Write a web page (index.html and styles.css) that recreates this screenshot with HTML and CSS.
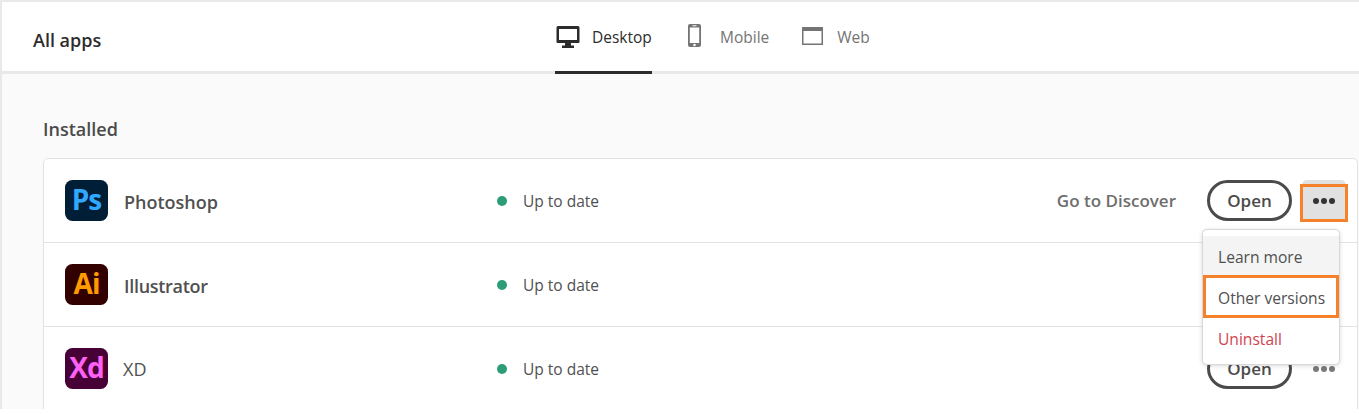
FILE: index.html
```html
<!DOCTYPE html>
<html lang="en">
<head>
<meta charset="utf-8">
<title>All apps</title>
<link rel="stylesheet" href="styles.css">
</head>
<body>
<div class="page">
  <header class="topbar">
    <h1 class="title">All apps</h1>
    <nav class="tabs">
      <a class="tab active">
        <svg class="ico" width="24" height="22" viewBox="0 0 24 22"><path fill="#2c2c2c" fill-rule="evenodd" d="M2 0h20a1.500 1.500 0 0 1 1.500 1.500V16a1 1 0 0 1-1 1H15v2.500h3V22H6v-2.500h3V17H1.500a1 1 0 0 1-1-1V1.500A1.500 1.500 0 0 1 2 0zm1 3V14h18V3z"/></svg>
        <span>Desktop</span>
      </a>
      <a class="tab mobile">
        <svg class="ico" width="13" height="23" viewBox="0 0 13 23"><path fill="#747474" fill-rule="evenodd" d="M2 0h9a2 2 0 0 1 2 2v19a2 2 0 0 1-2 2H2a2 2 0 0 1-2-2V2a2 2 0 0 1 2-2zM1.800 3.500v15.500h9.400V3.500zM6.500 19.700a1.300 1.300 0 1 0 0 2.600 1.300 1.300 0 0 0 0-2.600zM4.500 1.300v.9h4v-.9z"/></svg>
        <span>Mobile</span>
      </a>
      <a class="tab web">
        <svg class="ico" width="21" height="18" viewBox="0 0 21 18"><path fill="#747474" fill-rule="evenodd" d="M.5 0h20a.5.5 0 0 1 .5.5v17a.5.5 0 0 1-.5.5H.5a.5.5 0 0 1-.5-.5V.5A.5.5 0 0 1 .5 0zM1.500 4v12.500h18V4z"/></svg>
        <span>Web</span>
      </a>
    </nav>
  </header>
  <main class="content">
    <h2 class="section">Installed</h2>
    <section class="card">
      <div class="row">
        <svg class="logo" width="43" height="41" viewBox="0 0 43 41"><rect width="43" height="41" rx="7.500" fill="#001e36"/><text x="21.500" y="30" class="logo-text" fill="#31a8ff">Ps</text></svg>
        <span class="name">Photoshop</span>
        <span class="status"><i class="dot"></i>Up to date</span>
        <span class="discover">Go to Discover</span>
        <button class="open">Open</button>
        <span class="more hovered"><i></i><i></i><i></i></span>
      </div>
      <div class="row">
        <svg class="logo" width="43" height="41" viewBox="0 0 43 41"><rect width="43" height="41" rx="7.500" fill="#330000"/><text x="21.500" y="30" class="logo-text" fill="#ff9a00">Ai</text></svg>
        <span class="name tight">Illustrator</span>
        <span class="status"><i class="dot"></i>Up to date</span>
      </div>
      <div class="row">
        <svg class="logo" width="43" height="41" viewBox="0 0 43 41"><rect width="43" height="41" rx="7.500" fill="#470137"/><text x="21.500" y="30" class="logo-text" fill="#ff61f6">Xd</text></svg>
        <span class="name xd">XD</span>
        <span class="status"><i class="dot"></i>Up to date</span>
        <button class="open push">Open</button>
        <span class="more"><i></i><i></i><i></i></span>
      </div>
    </section>
  </main>
  <span class="mark mark-more"></span>
  <div class="menu">
    <a class="item first">Learn more</a>
    <a class="item marked">Other versions</a>
    <a class="item danger">Uninstall</a>
  </div>
</div>
</body>
</html>
```
FILE: styles.css
```css
* { box-sizing: border-box; }
html, body { margin: 0; padding: 0; background: #fff; }
body { font-family: "Open Sans", "Noto Sans", sans-serif; color: #4b4b4b; }
.page {
  position: relative;
  width: 1359px;
  height: 409px;
  overflow: hidden;
  background: #fafafa;
  border-top: 2px solid #e9e9e9;
  border-left: 2px solid #e9e9e9;
  display: flex;
  flex-direction: column;
}
.topbar {
  height: 72px;
  flex: none;
  background: #fff;
  border-bottom: 3px solid #e9e9e9;
  display: flex;
}
.title {
  margin: 0;
  padding: 27px 0 0 31px;
  width: 553px;
  font-size: 18px;
  font-weight: 600;
  line-height: 22px;
  color: #2c2c2c;
}
.tabs { display: flex; gap: 36px; }
.tab {
  height: 72px;
  display: flex;
  align-items: center;
  padding-bottom: 3px;
  font-size: 15.5px;
  color: #747474;
}
.tab.active {
  color: #2c2c2c;
  border-bottom: 3px solid #2c2c2c;
  padding-bottom: 0;
  gap: 12px;
  width: 97px;
}
.tab.mobile { gap: 19px; }
.tab.web { gap: 14px; margin-left: -3px; }
.ico { display: block; flex: none; }
.tab.active .ico { margin-left: 1px; }
.tab.web .ico, .tab.mobile .ico { margin-top: -2px; }
.content { padding: 0 1px 0 41px; flex: 1; }
.section {
  margin: 43px 0 17px;
  font-size: 18px;
  font-weight: 600;
  line-height: 24px;
  color: #4b4b4b;
}
.card {
  background: #fff;
  border: 1px solid #e3e3e3;
  border-radius: 5px;
  height: 260px;
}
.row {
  height: 84px;
  display: flex;
  align-items: center;
  padding: 0 11px 0 21px;
  border-bottom: 1px solid #e3e3e3;
}
.logo { flex: none; display: block; }
.logo-text {
  font-family: "Open Sans", sans-serif;
  font-size: 28px;
  font-weight: 700;
  text-anchor: middle;
  letter-spacing: -1px;
}
.name {
  width: 373px;
  margin-left: 16px;
  padding-top: 2px;
  font-size: 18px;
  font-weight: 600;
  color: #505050;
}
.name.tight { letter-spacing: -0.3px; }
.name.xd { font-weight: 400; margin-left: 15px; width: 374px; padding-top: 0; }
.status { display: flex; align-items: center; font-size: 15.5px; color: #505050; }
.dot { width: 10px; height: 10px; border-radius: 50%; background: #2d9d78; margin-right: 16px; }
.discover { margin-left: auto; margin-right: 31px; font-size: 17px; font-weight: 600; color: #6e6e6e; }
.open {
  width: 85px;
  height: 41px;
  border: 3px solid #4b4b4b;
  border-radius: 21px;
  background: #fff;
  font: 600 17px "Open Sans", sans-serif;
  color: #4b4b4b;
  padding: 0;
}
.open.push { margin-left: auto; }
.more {
  width: 44px;
  height: 41px;
  margin-left: 10px;
  border-radius: 5px;
  display: flex;
  align-items: center;
  justify-content: center;
  gap: 2px;
}
.more i { width: 6px; height: 6px; border-radius: 50%; background: #7a7a7a; }
.more.hovered { background: #e1e1e1; }
.more.hovered i { background: #333; }
.mark { position: absolute; border: 3px solid #f5822b; }
.mark-more { left: 1298px; top: 182px; width: 48px; height: 38px; }
.menu {
  position: absolute;
  left: 1200px;
  top: 227px;
  width: 138px;
  height: 136px;
  background: #fff;
  border: 1px solid #d8d8d8;
  border-radius: 5px;
  box-shadow: 0 1px 4px rgba(0,0,0,.15);
  padding: 6px 0;
  font-size: 15.6px;
}
.item { display: flex; align-items: center; height: 41px; padding-left: 15px; color: #505050; }
.item.first { background: #f4f4f4; }
.item.marked { border: 3px solid #f5822b; padding: 2px 0 0 12px; height: 43px; margin-top: -2px; }
.item.danger { color: #d0444f; }
```
